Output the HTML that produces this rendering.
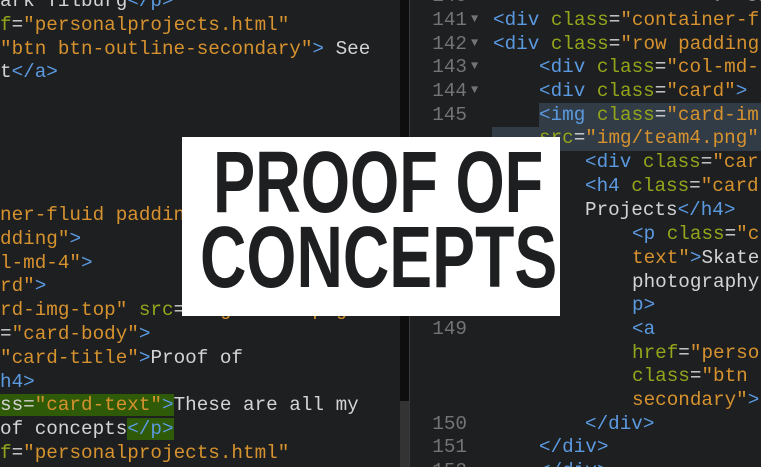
<!DOCTYPE html>
<html><head><meta charset="utf-8"><style>
html,body{margin:0;padding:0;width:761px;height:467px;overflow:hidden;background:#1e1f21;}
#wrap{position:relative;width:761px;height:467px;overflow:hidden;font-family:"Liberation Mono",monospace;}
.l{position:absolute;white-space:pre;font-size:19.3px;line-height:24px;height:24px;color:#d4d4d4;}
.t{color:#5b9ae0}.a{color:#94a51c}.s{color:#d6922e}.w{color:#d4d4d4}
.n{position:absolute;left:420px;width:47px;text-align:right;white-space:pre;font-size:19.3px;line-height:24px;color:#747474}
.f{position:absolute;left:471px;font-size:12px;color:#747474;line-height:24px}
.g{background:#2f5a07}
#sb{position:absolute;left:400px;top:0;width:9px;height:467px;background:#0e0e0e}
#th{position:absolute;left:400px;top:401px;width:9px;height:66px;background:#333}
#bd{position:absolute;left:409px;top:0;width:1px;height:467px;background:#3a3a3a}
.hl{position:absolute;background:#313c46;height:24px}
#box{position:absolute;left:182px;top:137px;width:378px;height:179px;background:#fff;overflow:hidden}
.big{position:absolute;font-family:"Liberation Sans",sans-serif;font-weight:bold;font-size:87px;color:#1e1f21;line-height:87px;white-space:nowrap;transform-origin:0 0}
</style></head><body><div id="wrap">
<div class="l" style="left:0;top:-11px"><span class="w">ark Tilburg</span><span class="t">&lt;/p&gt;</span></div>
<div class="l" style="left:0;top:13px"><span class="a">f</span>=<span class="s">"personalprojects.html"</span></div>
<div class="l" style="left:0;top:37px"><span class="s">"btn btn-outline-secondary"</span><span class="t">&gt;</span> See</div>
<div class="l" style="left:0;top:60px">t<span class="t">&lt;/a&gt;</span></div>
<div class="l" style="left:0;top:203px"><span class="s">ner-fluid paddin</span></div>
<div class="l" style="left:0;top:227px"><span class="s">dding"</span><span class="t">&gt;</span></div>
<div class="l" style="left:0;top:251px"><span class="s">l-md-4"</span><span class="t">&gt;</span></div>
<div class="l" style="left:0;top:274px"><span class="s">rd"</span><span class="t">&gt;</span></div>
<div class="l" style="left:0;top:298px"><span class="s">rd-img-top" </span><span class="a">src</span>=<span class="s">"img/team4.png"</span></div>
<div class="l" style="left:0;top:322px">=<span class="s">"card-body"</span><span class="t">&gt;</span></div>
<div class="l" style="left:0;top:346px"><span class="s">"card-title"</span><span class="t">&gt;</span>Proof of</div>
<div class="l" style="left:0;top:370px"><span class="t">h4&gt;</span></div>
<div class="l" style="left:0;top:393px"><span class="g">ss=<span class="s">"card-text"</span><span class="t">&gt;</span></span>These are all my</div>
<div class="l" style="left:0;top:417px">of concepts<span class="g"><span class="t">&lt;/p&gt;</span></span></div>
<div class="l" style="left:0;top:441px"><span class="a">f</span>=<span class="s">"personalprojects.html"</span></div>

<div id="sb"></div><div id="th"></div><div id="bd"></div>

<div class="hl" style="left:539px;top:103px;width:222px"></div>
<div class="hl" style="left:492px;top:127px;width:269px"></div>

<div class="n" style="top:-16px">140</div><div class="l" style="left:700px;top:-16px;color:#888">'.  ca</div>
<div class="n" style="top:8px">141</div><div class="f" style="top:7px">▼</div>
<div class="l" style="left:493px;top:8px"><span class="t">&lt;div</span> <span class="a">class</span>=<span class="s">"container-f</span></div>
<div class="n" style="top:32px">142</div><div class="f" style="top:31px">▼</div>
<div class="l" style="left:493px;top:32px"><span class="t">&lt;div</span> <span class="a">class</span>=<span class="s">"row padding</span></div>
<div class="n" style="top:55px">143</div><div class="f" style="top:54px">▼</div>
<div class="l" style="left:539px;top:55px"><span class="t">&lt;div</span> <span class="a">class</span>=<span class="s">"col-md-</span></div>
<div class="n" style="top:79px">144</div><div class="f" style="top:78px">▼</div>
<div class="l" style="left:539px;top:79px"><span class="t">&lt;div</span> <span class="a">class</span>=<span class="s">"card"</span><span class="t">&gt;</span></div>
<div class="n" style="top:103px">145</div>
<div class="l" style="left:539px;top:103px"><span class="t">&lt;img</span> <span class="a">class</span>=<span class="s">"card-im</span></div>
<div class="l" style="left:539px;top:126px"><span class="a">src</span>=<span class="s">"img/team4.png"</span></div>
<div class="n" style="top:150px">146</div><div class="f" style="top:149px">▼</div>
<div class="l" style="left:585px;top:150px"><span class="t">&lt;div</span> <span class="a">class</span>=<span class="s">"car</span></div>
<div class="n" style="top:174px">147</div><div class="f" style="top:173px">▼</div>
<div class="l" style="left:585px;top:174px"><span class="t">&lt;h4</span> <span class="a">class</span>=<span class="s">"card</span></div>
<div class="l" style="left:585px;top:198px">Projects<span class="t">&lt;/h4&gt;</span></div>
<div class="n" style="top:222px">148</div>
<div class="l" style="left:632px;top:222px"><span class="t">&lt;p</span> <span class="a">class</span>=<span class="s">"c</span></div>
<div class="l" style="left:632px;top:246px"><span class="s">text"</span><span class="t">&gt;</span>Skate</div>
<div class="l" style="left:632px;top:270px">photography</div>
<div class="l" style="left:632px;top:293px"><span class="t">p&gt;</span></div>
<div class="n" style="top:317px">149</div>
<div class="l" style="left:632px;top:317px"><span class="t">&lt;a</span></div>
<div class="l" style="left:632px;top:341px"><span class="a">href</span>=<span class="s">"perso</span></div>
<div class="l" style="left:632px;top:364px"><span class="a">class</span>=<span class="s">"btn</span></div>
<div class="l" style="left:632px;top:388px"><span class="s">secondary"</span><span class="t">&gt;</span></div>
<div class="n" style="top:412px">150</div>
<div class="l" style="left:585px;top:412px"><span class="t">&lt;/div&gt;</span></div>
<div class="n" style="top:435px">151</div>
<div class="l" style="left:539px;top:435px"><span class="t">&lt;/div&gt;</span></div>
<div class="n" style="top:459px">152</div>
<div class="l" style="left:539px;top:459px"><span class="t">&lt;/div&gt;</span></div>

<div id="box">
<div class="big" style="left:31px;top:2px;transform:scaleX(0.727)">PROOF OF</div>
<div class="big" style="left:18px;top:77px;transform:scaleX(0.739)">CONCEPTS</div>
</div>
</div></body></html>
